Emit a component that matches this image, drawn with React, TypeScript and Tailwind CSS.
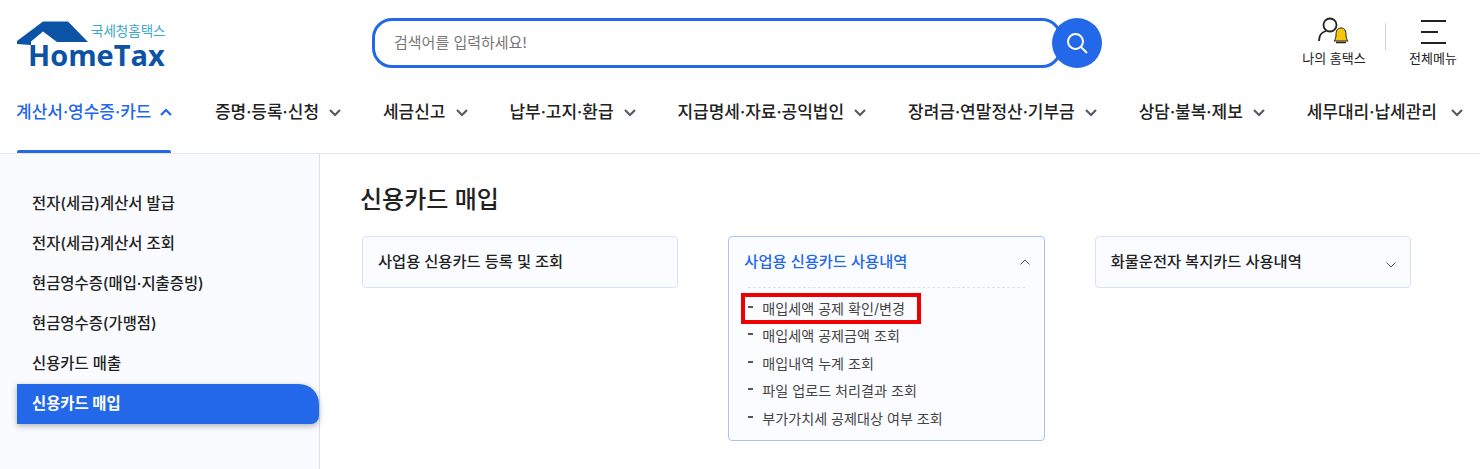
const nav = ["증명·등록·신청", "세금신고", "납부·고지·환급", "지급명세·자료·공익법인", "장려금·연말정산·기부금", "상담·불복·제보", "세무대리·납세관리"];
const side = ["전자(세금)계산서 발급", "전자(세금)계산서 조회", "현금영수증(매입·지출증빙)", "현금영수증(가맹점)", "신용카드 매출"];
const subs = ["매입세액 공제금액 조회", "매입내역 누계 조회", "파일 업로드 처리결과 조회", "부가가치세 공제대상 여부 조회"];

function Chev({ up, className }: { up?: boolean; className: string }) {
  return (
    <svg width="12" height="8" viewBox="0 0 12 8" fill="none" stroke="currentColor" strokeWidth="2.2" className={className}>
      <path d={up ? "M1 7 L6 2 L11 7" : "M1 1 L6 6 L11 1"} />
    </svg>
  );
}

function ThinChev({ up, className }: { up?: boolean; className: string }) {
  return (
    <svg width="10" height="6" viewBox="0 0 10 6" fill="none" stroke="#555" strokeWidth="1" className={className}>
      <path d={up ? "M0.5 5.5 L5 1 L9.5 5.5" : "M0.5 0.5 L5 5 L9.5 0.5"} />
    </svg>
  );
}

function Logo() {
  return (
    <div className="relative w-[150px] h-[46px] shrink-0">
      <svg width="72" height="26" viewBox="0 0 72 26" className="absolute left-0 top-0">
        <path d="M0 20 L26 0.5 L51 0.5 L71 21 L40 21 L26 10.5 L14 20.5 L14 24 L0 23 Z" fill="#0b54a5" />
      </svg>
      <span className="absolute left-[74px] top-[1px] text-[13.5px] leading-[18px] text-[#3aa9c8] whitespace-nowrap">국세청홈택스</span>
      <span className="absolute left-[11px] top-[22px] text-[29px] leading-[24px] font-bold text-[#0b54a5] whitespace-nowrap font-['Open_Sans',sans-serif]">HomeTax</span>
    </div>
  );
}

export default function App() {
  return (
    <div className="w-[1480px] h-[469px] overflow-hidden bg-white text-[#222] font-['Inter','Noto_Sans_CJK_KR',sans-serif]">
      <header className="h-[154px] border-b border-[#e8e8e8] flex flex-col">
        <div className="h-[86px] flex items-start pl-[17px] pt-[18px] shrink-0">
          <div className="pt-[3px]"><Logo /></div>
          <div className="ml-[205px] flex items-center">
            <div className="w-[690px] h-[50px] rounded-[20px] border-[3px] border-[#2468ea] flex items-center pl-[19px] pt-[1px] text-[15px] text-[#777]">검색어를 입력하세요!</div>
            <button className="-ml-[10px] w-[50px] h-[50px] rounded-full bg-[#2468ea] flex items-center justify-center">
              <svg width="22" height="22" viewBox="0 0 22 22" fill="none" stroke="#fff" strokeWidth="2">
                <circle cx="9.5" cy="9.5" r="7.5" />
                <path d="M15 15 L21 21" />
              </svg>
            </button>
          </div>
          <div className="ml-[197px] w-[70px] flex flex-col items-center">
            <svg width="32" height="30" viewBox="0 0 32 30" fill="none" className="-mt-[1px]">
              <circle cx="12" cy="8" r="6.5" stroke="#222" strokeWidth="1.8" />
              <path d="M1 24 C1 18 4 15 8 14" stroke="#222" strokeWidth="1.8" />
              <path d="M23 11 C27 11 28 14 28 18 C28 21 29 23 30 24 L16 24 C17 23 18 21 18 18 C18 14 19 11 23 11 Z" fill="#f5c60a" stroke="#222" strokeWidth="1" />
              <path d="M18 25.5 H28" stroke="#222" strokeWidth="1.5" />
            </svg>
            <span className="text-[13px] leading-[16px] mt-[3px] whitespace-nowrap">나의 홈택스</span>
          </div>
          <div className="ml-[16px] mt-[5px] w-px h-[27px] bg-[#d4d4d4]" />
          <div className="ml-[22px] w-[50px] flex flex-col items-center">
            <div className="h-[30px] w-[25px] flex flex-col justify-between py-[3px] -mt-[1px]">
              <div className="h-[2px] w-[25px] bg-[#222]" />
              <div className="h-[2px] w-[17px] bg-[#222]" />
              <div className="h-[2px] w-[25px] bg-[#222]" />
            </div>
            <span className="text-[13px] leading-[16px] mt-[3px] whitespace-nowrap">전체메뉴</span>
          </div>
        </div>
        <nav className="flex-1 flex items-start justify-between pl-[16px] pr-[17px] text-[17px] font-medium">
          <div className="relative h-[67px] w-[157px] flex items-start pt-[14px] text-[#2468ea]">
            <span className="leading-[24px] whitespace-nowrap">계산서·영수증·카드</span>
            <Chev up className="ml-[9px] mt-[8px] shrink-0" />
            <div className="absolute left-[1px] right-[2px] bottom-0 h-[3px] bg-[#2468ea] rounded-t-[2px]" />
          </div>
          {nav.map((n, i) => (
            <div key={n} className="flex items-start pt-[14px]">
              <span className="leading-[24px] whitespace-nowrap">{n}</span>
              <Chev className={i === 6 ? "ml-[14px] mt-[9px] shrink-0 text-[#555a64]" : "ml-[10px] mt-[9px] shrink-0 text-[#555a64]"} />
            </div>
          ))}
        </nav>
      </header>
      <div className="flex h-[315px]">
        <aside className="w-[320px] shrink-0 bg-[#f9fbff] border-r border-[#d6e0f8] pl-[17px] pt-[30px]">
          {side.map((s) => (
            <div key={s} className="h-[40px] pl-[15px] pb-[1px] flex items-center text-[15.4px] font-medium whitespace-nowrap">{s}</div>
          ))}
          <div className="h-[40px] pl-[15px] pb-[1px] flex items-center text-[15.4px] font-bold text-white bg-[#2468ea] rounded-tr-[20px] rounded-br-[8px] shadow-[0_2px_6px_rgba(0,0,0,0.3)]">신용카드 매입</div>
        </aside>
        <main className="flex-1 pl-[40px] pr-[69px] pt-[29px]">
          <h1 className="text-[24px] leading-[33px] font-medium">신용카드 매입</h1>
          <div className="grid grid-cols-3 gap-[50px] ml-[2px] mt-[20px] items-start">
            <div className="h-[52px] rounded-[4px] border border-[#d8e2f5] bg-[#fbfcff] flex items-center px-[15px] text-[15.3px] font-medium">사업용 신용카드 등록 및 조회</div>
            <div className="h-[205px] rounded-[4px] border border-[#a9c3f5] bg-[#fbfcff] px-[15px]">
              <div className="h-[50px] flex items-center justify-between text-[15.3px] font-medium text-[#2468ea]">
                <span>사업용 신용카드 사용내역</span>
                <ThinChev up className="-mr-[1px]" />
              </div>
              <div className="mx-[4px] border-t border-dashed border-[#dfe4ec]" />
              <div className="mt-[7px] text-[14.1px] text-[#444]">
                <div className="relative h-[27px] flex items-center pl-[18px]">
                  <span className="absolute left-[4px] top-[11px] w-[5px] h-[2px] bg-[#555]" />
                  <span>매입세액 공제 확인/변경</span>
                  <div className="absolute left-[-3px] top-[-2px] w-[180px] h-[31px] border-[4px] border-[#ee0000]" />
                </div>
                {subs.map((s) => (
                  <div key={s} className="relative h-[27.5px] flex items-center pl-[18px]">
                    <span className="absolute left-[4px] top-[11px] w-[5px] h-[2px] bg-[#555]" />
                    <span>{s}</span>
                  </div>
                ))}
              </div>
            </div>
            <div className="h-[52px] rounded-[4px] border border-[#d8e2f5] bg-[#fbfcff] flex items-center justify-between px-[15px] text-[15.3px] font-medium">
              <span>화물운전자 복지카드 사용내역</span>
              <ThinChev className="-mr-[1px] mt-[6px]" />
            </div>
          </div>
        </main>
      </div>
    </div>
  );
}
